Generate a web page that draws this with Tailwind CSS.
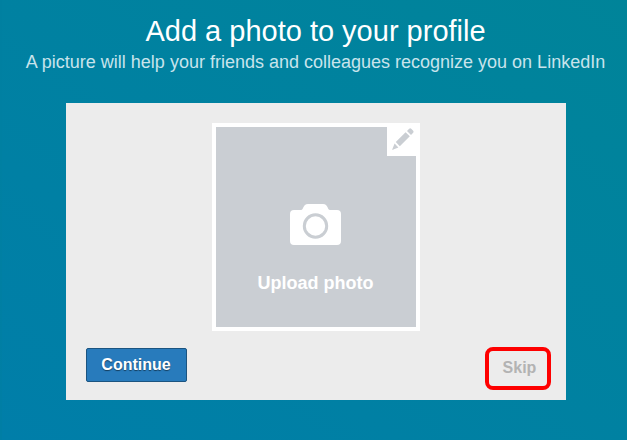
<!DOCTYPE html>
<html lang="en">
<head>
<meta charset="utf-8">
<title>Add a photo</title>
<script src="https://cdn.jsdelivr.net/npm/@tailwindcss/browser@4"></script>
</head>
<body class="h-[440px] w-[627px] overflow-hidden bg-linear-to-tr from-[#007ea9] to-[#008499] font-['Liberation_Sans',Arial,sans-serif]">
<main class="flex h-full flex-col items-center border-l-2 border-[#0080a0]/40 pl-[3px]">
  <h1 class="mt-3.5 mr-px h-[35px] whitespace-nowrap text-[29px] leading-[35px] text-white">Add a photo to your profile</h1>
  <p class="mt-px mr-px h-6 whitespace-nowrap text-[18px] leading-6 text-[#c8e4ec]">A picture will help your friends and colleagues recognize you on LinkedIn</p>
  <section class="mt-[29px] flex h-[297px] w-[500px] flex-col items-center bg-[#ececec] pt-5">
    <div class="relative flex h-[208px] w-[208px] flex-col items-center border-4 border-white bg-[#caced3] pr-px">
      <div class="absolute top-0 right-0 h-[29px] w-[29px] bg-white">
        <svg class="absolute top-0 left-[4px]" width="25" height="25" viewBox="0 0 25 25" fill="#caced3"><path d="M1 23 3.6 16.6 7.4 20.4ZM4.8 15 14.6 5.2 18.8 9.2 8.8 19.2ZM16 4 18.2 1.8Q19.2.9 20.2 1.8L22.2 3.8Q23 4.8 22.2 5.8L20 8Z"/></svg>
      </div>
      <svg class="mt-[77px]" width="51" height="41" viewBox="0 0 51 41"><path fill="#fff" d="M4 6H11C14 6 12.5 0 18 0H33C38.5 0 37 6 40 6H47Q51 6 51 10V37Q51 41 47 41H4Q0 41 0 37V10Q0 6 4 6Z"/><circle cx="25.5" cy="22" r="11.2" fill="none" stroke="#caced3" stroke-width="3"/></svg>
      <span class="mt-7 text-[18px] leading-5 font-bold text-white">Upload photo</span>
    </div>
    <div class="mt-4 flex w-full items-start justify-between pr-[15px] pl-5">
      <button class="mt-px h-[34px] w-[101px] rounded-[2px] border border-[#1b5480] bg-[#287bbc] pr-px pb-px text-[16px] leading-5 font-bold text-white text-shadow-[0_1px_1px_rgb(0_0_0/0.5)]">Continue</button>
      <button class="h-[43px] w-[66px] rounded-[8px] border-4 border-[#fe0000] pb-0.5 pl-[3px] text-[16px] leading-5 font-bold text-[#b3b3b3]">Skip</button>
    </div>
  </section>
</main>
</body>
</html>
